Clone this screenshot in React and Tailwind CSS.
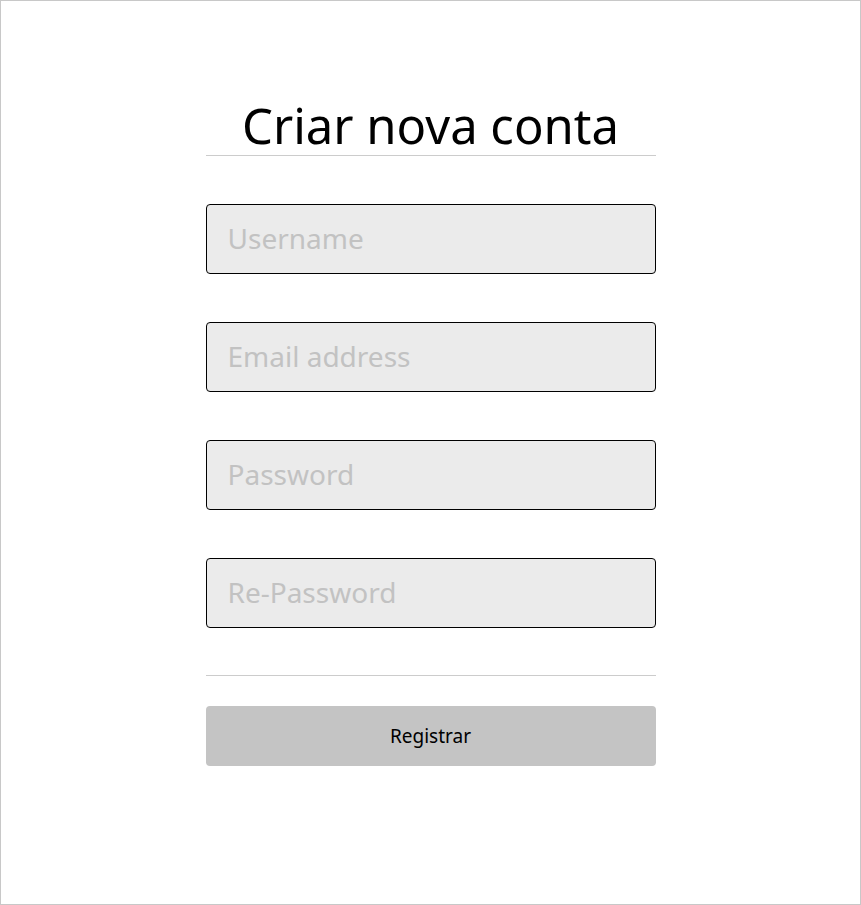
export default function App() {
  return (
    <div
      className="h-[905px] w-full border border-[#c8c8c8] bg-white"
      style={{ fontFamily: '"Noto Sans", sans-serif' }}
    >
      <div className="mx-auto w-[450px] pt-[96px]">
        <h1 className="text-center text-[49px] leading-[56px] font-normal text-black">Criar nova conta</h1>
        <hr className="mt-[2px] border-t border-[#cccccc]" />

        <form className="mt-[48px] flex flex-col gap-[48px]" onSubmit={(e) => e.preventDefault()}>
          <Field placeholder="Username" />
          <Field placeholder="Email address" type="email" />
          <Field placeholder="Password" type="password" />
          <Field placeholder="Re-Password" type="password" />
        </form>

        <hr className="mt-[47px] border-t border-[#cccccc]" />

        <button
          type="button"
          className="mt-[30px] h-[60px] w-full rounded-[4px] bg-[#c4c4c4] text-[19px] text-black"
        >
          Registrar
        </button>
      </div>
    </div>
  );
}

function Field({ placeholder, type = "text" }) {
  return (
    <input
      type={type}
      placeholder={placeholder}
      className="h-[70px] w-full rounded-[4px] border border-black bg-[#ebebeb] px-[21px] pb-[2px] text-[28px] text-black outline-none placeholder:text-[#c2c2c2]"
    />
  );
}
